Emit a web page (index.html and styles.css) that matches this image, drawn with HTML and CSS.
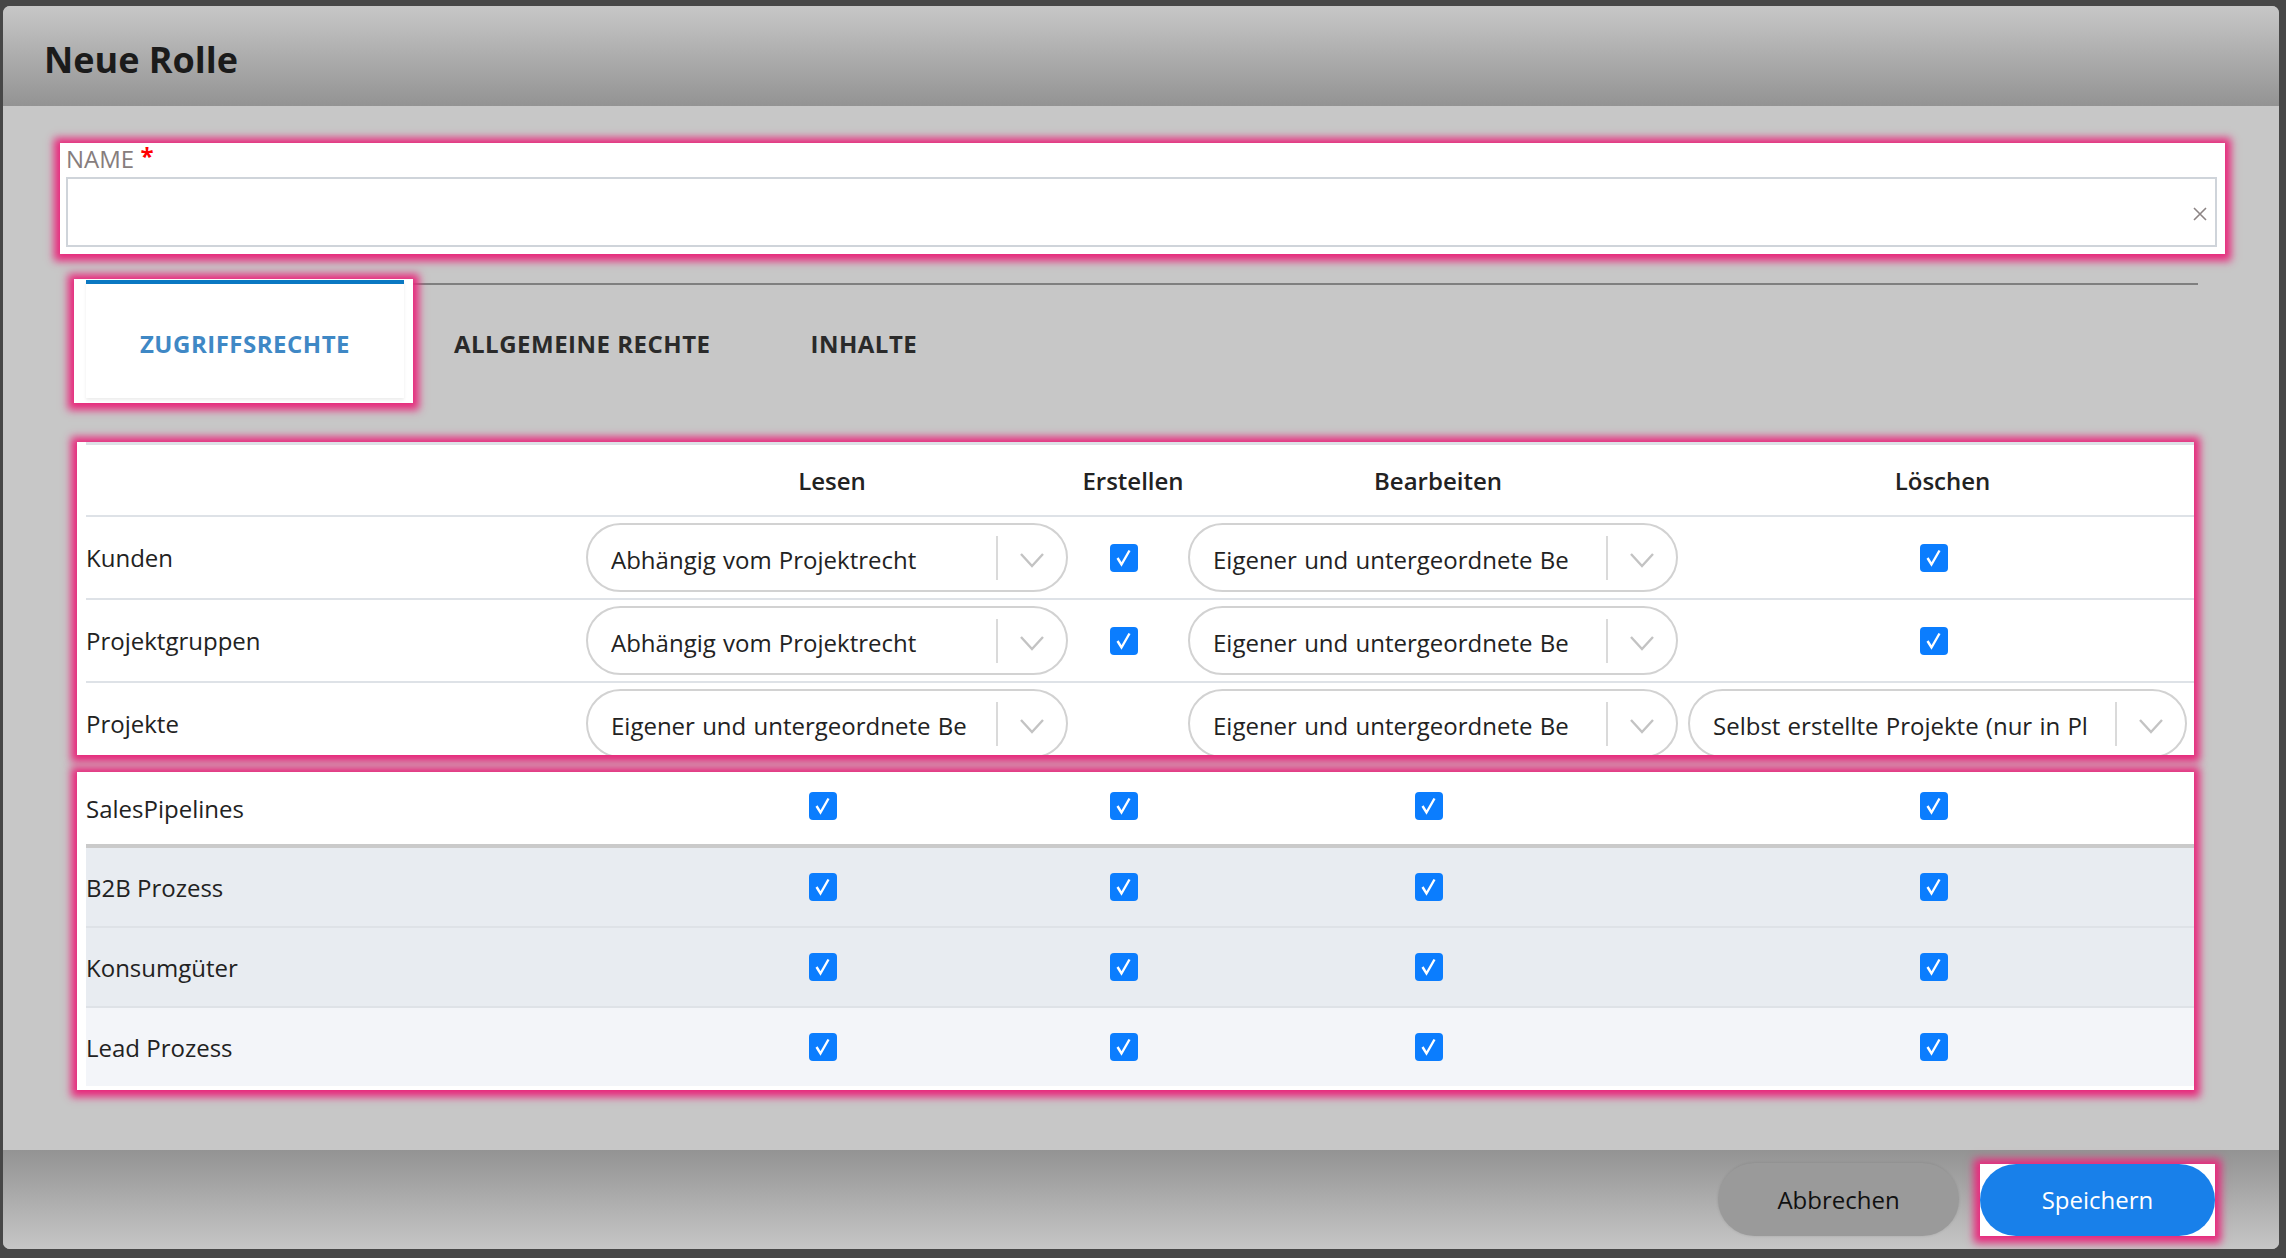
FILE: index.html
```html
<!DOCTYPE html>
<html lang="de">
<head>
    <meta charset="UTF-8">
    <meta name="viewport" content="width=device-width, initial-scale=1.0">
    <title>Neue Rolle</title>
    <link rel="stylesheet" href="styles.css">
</head>
<body>
    <svg class="icon-sprites" xmlns="http://www.w3.org/2000/svg">
        <symbol id="icon-check" viewBox="0 0 28 28">
            <rect width="28" height="28" rx="4" fill="#0b7dfe"/>
            <path d="M7.5 14 L11.5 20.5 L19.5 6.5" fill="none" stroke="#fff" stroke-width="2.4"/>
        </symbol>
        <symbol id="icon-chevron" viewBox="0 0 26 16">
            <path d="M2 2 L13 14 L24 2" fill="none" stroke="#c3c3c3" stroke-width="2.4"/>
        </symbol>
        <symbol id="icon-clear" viewBox="0 0 16 16">
            <path d="M2 2 L14 14 M14 2 L2 14" stroke="#8c8484" stroke-width="1.6"/>
        </symbol>
    </svg>

    <div class="dialog">
        <header class="dialog-header">
            <h1 class="dialog-title">Neue Rolle</h1>
        </header>

        <main class="dialog-body">
            <div class="name-field highlight">
                <label class="field-label" for="roleName">NAME <span class="required">*</span></label>
                <div class="name-input">
                    <input id="roleName" type="text">
                    <button class="clear-button" type="button"><svg class="clear-icon"><use href="#icon-clear"/></svg></button>
                </div>
            </div>

            <nav class="tabs">
                <div class="tab-wrap highlight">
                    <div class="tab tab-active">Zugriffsrechte</div>
                </div>
                <div class="tab tab-first">Allgemeine Rechte</div>
                <div class="tab">Inhalte</div>
            </nav>

            <section class="rights highlight">
                <div class="rights-row rights-head">
                    <div></div>
                    <div class="head-cell">Lesen</div>
                    <div class="head-cell">Erstellen</div>
                    <div class="head-cell">Bearbeiten</div>
                    <div class="head-cell">Löschen</div>
                </div>
                <div class="rights-row">
                    <div class="row-label">Kunden</div>
                    <div class="cell">
                        <div class="select"><span class="select-value">Abhängig vom Projektrecht</span><span class="select-sep"></span><span class="select-arrow"><svg class="chevron"><use href="#icon-chevron"/></svg></span></div>
                    </div>
                    <div class="cell"><svg class="check"><use href="#icon-check"/></svg></div>
                    <div class="cell">
                        <div class="select"><span class="select-value">Eigener und untergeordnete Be</span><span class="select-sep"></span><span class="select-arrow"><svg class="chevron"><use href="#icon-chevron"/></svg></span></div>
                    </div>
                    <div class="cell"><svg class="check"><use href="#icon-check"/></svg></div>
                </div>
                <div class="rights-row">
                    <div class="row-label">Projektgruppen</div>
                    <div class="cell">
                        <div class="select"><span class="select-value">Abhängig vom Projektrecht</span><span class="select-sep"></span><span class="select-arrow"><svg class="chevron"><use href="#icon-chevron"/></svg></span></div>
                    </div>
                    <div class="cell"><svg class="check"><use href="#icon-check"/></svg></div>
                    <div class="cell">
                        <div class="select"><span class="select-value">Eigener und untergeordnete Be</span><span class="select-sep"></span><span class="select-arrow"><svg class="chevron"><use href="#icon-chevron"/></svg></span></div>
                    </div>
                    <div class="cell"><svg class="check"><use href="#icon-check"/></svg></div>
                </div>
                <div class="rights-row">
                    <div class="row-label">Projekte</div>
                    <div class="cell">
                        <div class="select"><span class="select-value">Eigener und untergeordnete Be</span><span class="select-sep"></span><span class="select-arrow"><svg class="chevron"><use href="#icon-chevron"/></svg></span></div>
                    </div>
                    <div class="cell"></div>
                    <div class="cell">
                        <div class="select"><span class="select-value">Eigener und untergeordnete Be</span><span class="select-sep"></span><span class="select-arrow"><svg class="chevron"><use href="#icon-chevron"/></svg></span></div>
                    </div>
                    <div class="cell">
                        <div class="select"><span class="select-value">Selbst erstellte Projekte (nur in Pl</span><span class="select-sep"></span><span class="select-arrow"><svg class="chevron"><use href="#icon-chevron"/></svg></span></div>
                    </div>
                </div>
            </section>

            <section class="pipelines highlight">
                <div class="rights-row pipeline-row">
                    <div class="row-label">SalesPipelines</div>
                    <div class="cell"><svg class="check"><use href="#icon-check"/></svg></div>
                    <div class="cell"><svg class="check"><use href="#icon-check"/></svg></div>
                    <div class="cell"><svg class="check"><use href="#icon-check"/></svg></div>
                    <div class="cell"><svg class="check"><use href="#icon-check"/></svg></div>
                </div>
                <div class="rights-row pipeline-row row-shaded">
                    <div class="row-label">B2B Prozess</div>
                    <div class="cell"><svg class="check"><use href="#icon-check"/></svg></div>
                    <div class="cell"><svg class="check"><use href="#icon-check"/></svg></div>
                    <div class="cell"><svg class="check"><use href="#icon-check"/></svg></div>
                    <div class="cell"><svg class="check"><use href="#icon-check"/></svg></div>
                </div>
                <div class="rights-row pipeline-row row-shaded">
                    <div class="row-label">Konsumgüter</div>
                    <div class="cell"><svg class="check"><use href="#icon-check"/></svg></div>
                    <div class="cell"><svg class="check"><use href="#icon-check"/></svg></div>
                    <div class="cell"><svg class="check"><use href="#icon-check"/></svg></div>
                    <div class="cell"><svg class="check"><use href="#icon-check"/></svg></div>
                </div>
                <div class="rights-row pipeline-row row-light">
                    <div class="row-label">Lead Prozess</div>
                    <div class="cell"><svg class="check"><use href="#icon-check"/></svg></div>
                    <div class="cell"><svg class="check"><use href="#icon-check"/></svg></div>
                    <div class="cell"><svg class="check"><use href="#icon-check"/></svg></div>
                    <div class="cell"><svg class="check"><use href="#icon-check"/></svg></div>
                </div>
            </section>
        </main>

        <footer class="dialog-footer">
            <button class="button button-cancel" type="button">Abbrechen</button>
            <div class="save-wrap highlight">
                <button class="button button-save" type="button">Speichern</button>
            </div>
        </footer>
    </div>
</body>
</html>
```

FILE: styles.css
```css
:root {
    --page-color: #474747;
    --panel-color: #c7c7c7;
    --highlight-color: #e8297c;
    --text-color: #222222;
    --tab-blue: #3f88c5;
    --line-color: #dee2e7;
    --columns: 497px 488px 114px 496px minmax(0, 1fr);
}

body {
    margin: 0;
    height: 1258px;
    overflow: hidden;
    background: var(--page-color);
    font-family: "Open Sans", "Liberation Sans", sans-serif;
    color: var(--text-color);
}

.icon-sprites {
    position: absolute;
    width: 0;
    height: 0;
    overflow: hidden;
}

.dialog {
    margin: 6px 0 0 3px;
    width: 2276px;
    height: 1243px;
    border-radius: 7px;
    overflow: hidden;
    display: flex;
    flex-direction: column;
    background: var(--panel-color);
}

.dialog-header {
    height: 100px;
    box-sizing: border-box;
    display: flex;
    align-items: center;
    padding: 6px 0 0 41px;
    background: linear-gradient(#c7c7c7, #939393);
}

.dialog-title {
    margin: 0;
    font-size: 36px;
    font-weight: 700;
    color: #1b1b1b;
}

.dialog-body {
    flex: 1;
    padding: 37px 54px 0 57px;
}

.highlight {
    background: #ffffff;
    box-shadow: 0 1px 8px 6px var(--highlight-color);
}

/* name field */
.name-field {
    padding: 1px 8px 7px 6px;
}

.field-label {
    display: block;
    height: 24px;
    line-height: 24px;
    font-size: 24px;
    color: #877d7d;
    margin-bottom: 9px;
}

.required {
    color: #ff0000;
    font-weight: 700;
    vertical-align: 3px;
}

.name-input {
    display: flex;
    align-items: center;
    height: 70px;
    box-sizing: border-box;
    border: 2px solid #cfd4da;
}

.name-input input {
    flex: 1;
    height: 100%;
    border: none;
    outline: none;
    background: none;
    font-family: inherit;
    font-size: 24px;
}

.clear-button {
    border: none;
    background: none;
    padding: 0;
    margin: 4px 7px 0 0;
    display: flex;
}

.clear-icon {
    width: 16px;
    height: 16px;
}

/* tabs */
.tabs {
    display: flex;
    height: 124px;
    margin: 25px 27px 0 14px;
    background: linear-gradient(#7f7f7f, #7f7f7f) no-repeat 0 4px / 100% 2px;
}

.tab-wrap {
    display: flex;
    padding: 1px 9px 5px 12px;
}

.tab {
    display: flex;
    align-items: center;
    padding: 5px 50px 0;
    font-size: 24px;
    font-weight: 700;
    letter-spacing: 0.5px;
    text-transform: uppercase;
    color: #2a2a2a;
}

.tab-first {
    margin-left: -9px;
}

.tab-active {
    width: 318px;
    box-sizing: border-box;
    justify-content: center;
    padding: 4px 0 0;
    border-top: 4px solid #0a78c2;
    background: #ffffff;
    color: var(--tab-blue);
    box-shadow: 0 2px 3px rgba(0, 0, 0, 0.08);
}

/* rights tables */
.rights {
    margin: 39px 31px 0 17px;
    padding-left: 9px;
    height: 313px;
    overflow: hidden;
    box-sizing: border-box;
}

.rights-row {
    display: grid;
    grid-template-columns: var(--columns);
    align-items: center;
    height: 81px;
    border-top: 2px solid var(--line-color);
    font-size: 24px;
}

.rights-head {
    height: 70px;
    border-top-width: 3px;
    font-weight: 600;
}

.head-cell {
    text-align: center;
    padding-left: 10px;
}

.row-label {
    white-space: nowrap;
}

.cell {
    min-width: 0;
    display: flex;
    justify-content: center;
    padding: 0 3px;
}

.cell:last-child {
    padding: 0 7px;
}

.select {
    flex: 1;
    min-width: 0;
    display: flex;
    align-items: center;
    height: 69px;
    box-sizing: border-box;
    border: 2px solid #d2d2d2;
    border-radius: 35px;
    background: #ffffff;
}

.select-value {
    flex: 1;
    min-width: 0;
    margin: 0 20px 0 23px;
    padding-top: 4px;
    overflow: hidden;
    white-space: nowrap;
    word-spacing: 1px;
}

.select-sep {
    width: 2px;
    height: 44px;
    background: #dadada;
}

.select-arrow {
    width: 68px;
    display: flex;
    justify-content: center;
    padding-top: 4px;
}

.chevron {
    width: 26px;
    height: 16px;
}

.check {
    width: 28px;
    height: 28px;
    margin-right: 8px;
}

.pipelines {
    margin: 17px 31px 0 17px;
    padding: 0 0 4px 9px;
}

.pipeline-row:first-child {
    height: 72px;
    border-top: none;
}

.pipeline-row:first-child .check {
    margin-top: -4px;
}

.pipeline-row {
    height: 78px;
}

.pipeline-row:nth-child(2) {
    border-top: 4px solid #cacaca;
}

.row-shaded {
    background: #e8ecf1;
}

.row-light {
    background: #f3f5f9;
}

/* footer */
.dialog-footer {
    height: 99px;
    box-sizing: border-box;
    display: flex;
    justify-content: flex-end;
    align-items: center;
    gap: 21px;
    padding-right: 64px;
    background: linear-gradient(#939393, #c6c6c6);
}

.button {
    border: none;
    outline: none;
    height: 73px;
    border-radius: 37px;
    font-family: inherit;
    font-size: 24px;
}

.button-cancel {
    width: 241px;
    background: #9a9a9a;
    color: #111111;
    box-shadow: 0 0 3px rgba(0, 0, 0, 0.12);
}

.save-wrap {
    width: 235px;
    height: 72px;
    display: flex;
}

.button-save {
    width: 100%;
    height: 100%;
    border-radius: 36px;
    background: #1880ea;
    color: #ffffff;
}
```
